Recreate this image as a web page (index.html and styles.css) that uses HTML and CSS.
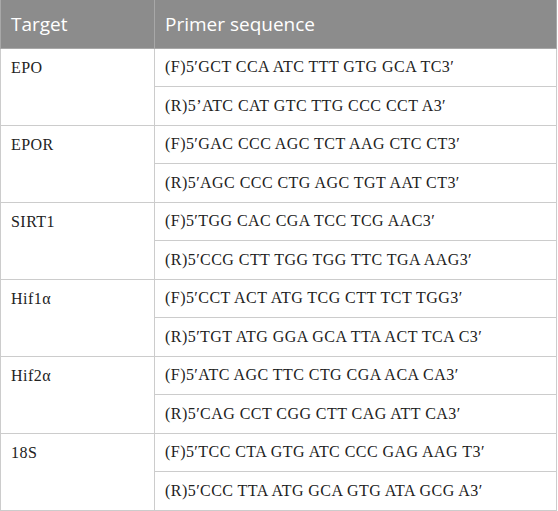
FILE: index.html
```html
<!DOCTYPE html>
<html>
<head>
<meta charset="utf-8">
<link rel="stylesheet" href="styles.css">
</head>
<body>
<table class="primers">
  <thead>
    <tr><th class="c1">Target</th><th class="c2">Primer sequence</th></tr>
  </thead>
  <tbody>
    <tr><td class="target" rowspan="2">EPO</td><td>(F)5′GCT CCA ATC TTT GTG GCA TC3′</td></tr>
    <tr><td>(R)5’ATC CAT GTC TTG CCC CCT A3′</td></tr>
    <tr><td class="target" rowspan="2">EPOR</td><td>(F)5′GAC CCC AGC TCT AAG CTC CT3′</td></tr>
    <tr><td>(R)5′AGC CCC CTG AGC TGT AAT CT3′</td></tr>
    <tr><td class="target" rowspan="2">SIRT1</td><td>(F)5′TGG CAC CGA TCC TCG AAC3′</td></tr>
    <tr><td>(R)5′CCG CTT TGG TGG TTC TGA AAG3′</td></tr>
    <tr><td class="target" rowspan="2">Hif1α</td><td>(F)5′CCT ACT ATG TCG CTT TCT TGG3′</td></tr>
    <tr><td>(R)5′TGT ATG GGA GCA TTA ACT TCA C3′</td></tr>
    <tr><td class="target" rowspan="2">Hif2α</td><td>(F)5′ATC AGC TTC CTG CGA ACA CA3′</td></tr>
    <tr><td>(R)5′CAG CCT CGG CTT CAG ATT CA3′</td></tr>
    <tr><td class="target" rowspan="2">18S</td><td>(F)5′TCC CTA GTG ATC CCC GAG AAG T3′</td></tr>
    <tr><td>(R)5′CCC TTA ATG GCA GTG ATA GCG A3′</td></tr>
  </tbody>
</table>
</body>
</html>
```
FILE: styles.css
```css
html, body {
  margin: 0;
  padding: 0;
  background: #ffffff;
}
.primers {
  border-collapse: collapse;
  width: 557px;
  table-layout: fixed;
  font-family: "Liberation Serif", "Times New Roman", serif;
  font-size: 16px;
  letter-spacing: 0.45px;
  color: #222222;
}
.primers th {
  background: #8c8c8c;
  color: #ffffff;
  font-family: "Open Sans", "Noto Sans", sans-serif;
  font-weight: 400;
  font-size: 19px;
  letter-spacing: 0;
  text-align: left;
  height: 48px;
  padding: 0 0 0 10px;
  border: 1px solid #a8a8a8;
  border-top: none;
  box-sizing: border-box;
}
.primers th.c1 {
  width: 154px;
}
.primers td {
  height: 38.5px;
  padding: 0 0 0 10px;
  border: 1px solid #cccccc;
  vertical-align: middle;
  box-sizing: border-box;
  line-height: 18px;
}
.primers td.target {
  vertical-align: top;
  padding-top: 10px;
}
```
